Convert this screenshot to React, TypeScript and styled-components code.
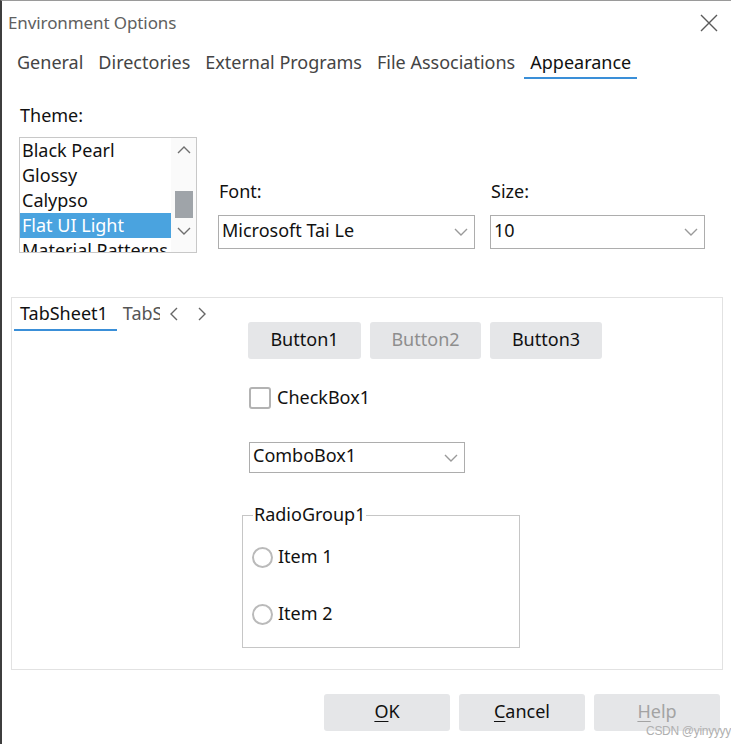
import React from "react";
import styled, { createGlobalStyle } from "styled-components";

const GlobalStyle = createGlobalStyle`
  html, body {
    margin: 0;
    padding: 0;
    background: #ffffff;
  }
  body {
    font-family: "Noto Sans", "Open Sans", sans-serif;
    color: #111;
  }
  * {
    box-sizing: border-box;
  }
`;

const Window = styled.div`
  position: relative;
  width: 731px;
  height: 744px;
  background: #fff;
  border-left: 2px solid #3e3e3e;
  border-top: 1px solid #9a9a9a;
  display: flex;
  flex-direction: column;
  overflow: hidden;
`;

const TitleBar = styled.div`
  height: 44px;
  display: flex;
  align-items: center;
  justify-content: space-between;
  padding: 0 12px 0 6px;
`;

const Title = styled.span`
  font-size: 17px;
  color: #606060;
  line-height: 22px;
  letter-spacing: -0.1px;
`;

const CloseButton = styled.button`
  border: none;
  background: transparent;
  padding: 0;
  width: 20px;
  height: 20px;
  display: flex;
  align-items: center;
  justify-content: center;
`;

const TabStrip = styled.div`
  display: flex;
  gap: 3px;
  padding-left: 9px;
  height: 34px;
`;

const Tab = styled.div<{ $active?: boolean }>`
  height: 34px;
  padding: 4px 6px 0;
  font-size: 18px;
  line-height: 26px;
  color: ${(p) => (p.$active ? "#111" : "#444")};
  border-bottom: 2px solid ${(p) => (p.$active ? "#3a8fd8" : "transparent")};
  white-space: nowrap;
`;

const Appearance = styled.div`
  padding: 24px 0 0 17px;
`;

const Label = styled.div`
  font-size: 18px;
  line-height: 24px;
  color: #111;
  padding-left: 1px;
`;

const OptionsRow = styled.div`
  display: flex;
  align-items: flex-end;
  gap: 21px;
  margin-top: 10px;
`;

const ListBox = styled.div`
  width: 178px;
  height: 116px;
  border: 1px solid #c8c8c8;
  display: flex;
  overflow: hidden;
  flex: none;
`;

const ListItems = styled.div`
  width: 151px;
  display: flex;
  flex-direction: column;
`;

const ListItem = styled.div<{ $selected?: boolean }>`
  height: 25px;
  flex: none;
  padding-left: 2px;
  font-size: 18px;
  line-height: 24px;
  white-space: nowrap;
  background: ${(p) => (p.$selected ? "#4aa3df" : "transparent")};
  color: ${(p) => (p.$selected ? "#fff" : "#111")};
`;

const ScrollBar = styled.div`
  width: 25px;
  display: flex;
  flex-direction: column;
  align-items: center;
  background: #fafafa;
  padding: 8px 0 4px;
`;

const ScrollThumb = styled.div`
  width: 18px;
  height: 27px;
  background: #9fa4a9;
  margin: 37px 0 9px;
`;

const FieldGroup = styled.div`
  display: flex;
  gap: 15px;
`;

const Field = styled.div<{ $width: number }>`
  width: ${(p) => p.$width}px;
  display: flex;
  flex-direction: column;
  gap: 12px;
  margin-bottom: 4px;
`;

const Combo = styled.div<{ $width: number; $height: number }>`
  width: ${(p) => p.$width}px;
  height: ${(p) => p.$height}px;
  border: 1px solid #adadad;
  display: flex;
  align-items: center;
  justify-content: space-between;
  padding: 0 6px 0 3px;
  font-size: 18px;
  line-height: 24px;
  color: #111;
`;

const ComboText = styled.span`
  margin-top: -5px;
`;

const Panel = styled.div`
  margin: 44px 0 0 9px;
  width: 712px;
  height: 373px;
  border: 1px solid #e2e2e2;
  display: flex;
  align-items: flex-start;
`;

const PageControl = styled.div`
  position: relative;
  margin-left: 2px;
  width: 201px;
  height: 33px;
  display: flex;
  overflow: hidden;
`;

const PageTab = styled.div<{ $active?: boolean }>`
  flex: none;
  height: 33px;
  padding: 2px ${(p) => (p.$active ? 9 : 6)}px 0 6px;
  font-size: 18px;
  line-height: 26px;
  color: ${(p) => (p.$active ? "#111" : "#555")};
  border-bottom: 2px solid ${(p) => (p.$active ? "#3a8fd8" : "transparent")};
`;

const TabScroller = styled.div`
  position: absolute;
  right: 0;
  top: 0;
  width: 55px;
  height: 31px;
  background: #fff;
  display: flex;
  align-items: center;
  justify-content: space-between;
  padding: 0 9px 0 10px;
`;

const FormColumn = styled.div`
  margin-left: 33px;
  padding-top: 24px;
  display: flex;
  flex-direction: column;
  align-items: flex-start;
`;

const ButtonRow = styled.div`
  display: flex;
  gap: 9px;
`;

const Button = styled.button<{ $width: number; $disabled?: boolean; $faint?: boolean }>`
  width: ${(p) => p.$width}px;
  height: 37px;
  border: none;
  border-radius: 3px;
  background: #e5e6e8;
  font-family: "Noto Sans", "Open Sans", sans-serif;
  font-size: 18px;
  line-height: 24px;
  padding: 0 0 3px;
  color: ${(p) => (p.$faint ? "#a3a3a3" : p.$disabled ? "#8e8e8e" : "#111")};
  u {
    text-underline-offset: 3px;
    text-decoration-thickness: 1px;
  }
`;

const CheckRow = styled.label`
  margin: 28px 0 0 1px;
  display: flex;
  align-items: center;
  gap: 6px;
  font-size: 18px;
  line-height: 24px;
`;

const CheckSquare = styled.span`
  width: 22px;
  height: 22px;
  border: 2px solid #b3b3b3;
  border-radius: 3px;
  background: #fff;
`;

const CheckText = styled.span`
  margin-top: -3px;
`;

const FormCombo = styled(Combo)`
  margin: 33px 0 0 1px;
`;

const GroupBox = styled.div`
  position: relative;
  margin: 42px 0 0 -6px;
  width: 278px;
  height: 133px;
  border: 1px solid #c6c6c6;
  padding: 27px 0 0 9px;
  display: flex;
  flex-direction: column;
  gap: 31px;
`;

const GroupCaption = styled.span`
  position: absolute;
  top: -14px;
  left: 10px;
  padding: 0 1px;
  background: #fff;
  font-size: 18px;
  line-height: 24px;
`;

const RadioRow = styled.label`
  height: 26px;
  display: flex;
  align-items: center;
  gap: 5px;
  font-size: 18px;
  line-height: 24px;
`;

const RadioCircle = styled.span`
  width: 21px;
  height: 21px;
  border: 2px solid #bababa;
  border-radius: 50%;
  margin-top: 2px;
`;

const DialogButtons = styled.div`
  margin-top: 24px;
  display: flex;
  justify-content: flex-end;
  gap: 9px;
  padding-right: 11px;
`;

const Watermark = styled.span`
  position: absolute;
  right: 0;
  bottom: 6px;
  font-family: "Liberation Sans", Arial, sans-serif;
  font-size: 12px;
  line-height: 13px;
  color: #b0b0b0;
  letter-spacing: -0.3px;
`;

const Chevron = ({ dir, color = "#9a9a9a" }: { dir: "up" | "down" | "left" | "right"; color?: string }) => {
  const paths = {
    down: "M1 1 L7 7 L13 1",
    up: "M1 7 L7 1 L13 7",
    left: "M7 1 L1 7 L7 13",
    right: "M1 1 L7 7 L1 13",
  };
  const vertical = dir === "up" || dir === "down";
  return (
    <svg width={vertical ? 14 : 8} height={vertical ? 8 : 14} viewBox={vertical ? "0 0 14 8" : "0 0 8 14"}>
      <path d={paths[dir]} fill="none" stroke={color} strokeWidth="1.4" />
    </svg>
  );
};

const themes = ["Black Pearl", "Glossy", "Calypso", "Flat UI Light", "Material Patterns"];

export default function App() {
  return (
    <>
      <GlobalStyle />
      <Window>
        <TitleBar>
          <Title>Environment Options</Title>
          <CloseButton>
            <svg width="18" height="18" viewBox="0 0 18 18">
              <path d="M1 1 L17 17 M17 1 L1 17" stroke="#5a5a5a" strokeWidth="1.4" />
            </svg>
          </CloseButton>
        </TitleBar>

        <TabStrip>
          <Tab>General</Tab>
          <Tab>Directories</Tab>
          <Tab>External Programs</Tab>
          <Tab>File Associations</Tab>
          <Tab $active>Appearance</Tab>
        </TabStrip>

        <Appearance>
          <Label>Theme:</Label>
          <OptionsRow>
            <ListBox>
              <ListItems>
                {themes.map((t) => (
                  <ListItem key={t} $selected={t === "Flat UI Light"}>
                    {t}
                  </ListItem>
                ))}
              </ListItems>
              <ScrollBar>
                <Chevron dir="up" color="#6f6f6f" />
                <ScrollThumb />
                <Chevron dir="down" color="#6f6f6f" />
              </ScrollBar>
            </ListBox>
            <FieldGroup>
              <Field $width={257}>
                <Label>Font:</Label>
                <Combo $width={257} $height={34}>
                  <ComboText>Microsoft Tai Le</ComboText>
                  <Chevron dir="down" />
                </Combo>
              </Field>
              <Field $width={215}>
                <Label>Size:</Label>
                <Combo $width={215} $height={34}>
                  <ComboText>10</ComboText>
                  <Chevron dir="down" />
                </Combo>
              </Field>
            </FieldGroup>
          </OptionsRow>
        </Appearance>

        <Panel>
          <PageControl>
            <PageTab $active>TabSheet1</PageTab>
            <PageTab>TabSheet2</PageTab>
            <TabScroller>
              <Chevron dir="left" color="#666" />
              <Chevron dir="right" color="#666" />
            </TabScroller>
          </PageControl>

          <FormColumn>
            <ButtonRow>
              <Button $width={113}>Button1</Button>
              <Button $width={111} $disabled>
                Button2
              </Button>
              <Button $width={112}>Button3</Button>
            </ButtonRow>

            <CheckRow>
              <CheckSquare />
              <CheckText>CheckBox1</CheckText>
            </CheckRow>

            <FormCombo $width={216} $height={31}>
              <ComboText>ComboBox1</ComboText>
              <Chevron dir="down" />
            </FormCombo>

            <GroupBox>
              <GroupCaption>RadioGroup1</GroupCaption>
              <RadioRow>
                <RadioCircle />
                <span>Item 1</span>
              </RadioRow>
              <RadioRow>
                <RadioCircle />
                <span>Item 2</span>
              </RadioRow>
            </GroupBox>
          </FormColumn>
        </Panel>

        <DialogButtons>
          <Button $width={126}>
            <u>O</u>K
          </Button>
          <Button $width={126}>
            <u>C</u>ancel
          </Button>
          <Button $width={126} $faint>
            <u>H</u>elp
          </Button>
        </DialogButtons>

        <Watermark>CSDN @yinyyyy</Watermark>
      </Window>
    </>
  );
}
